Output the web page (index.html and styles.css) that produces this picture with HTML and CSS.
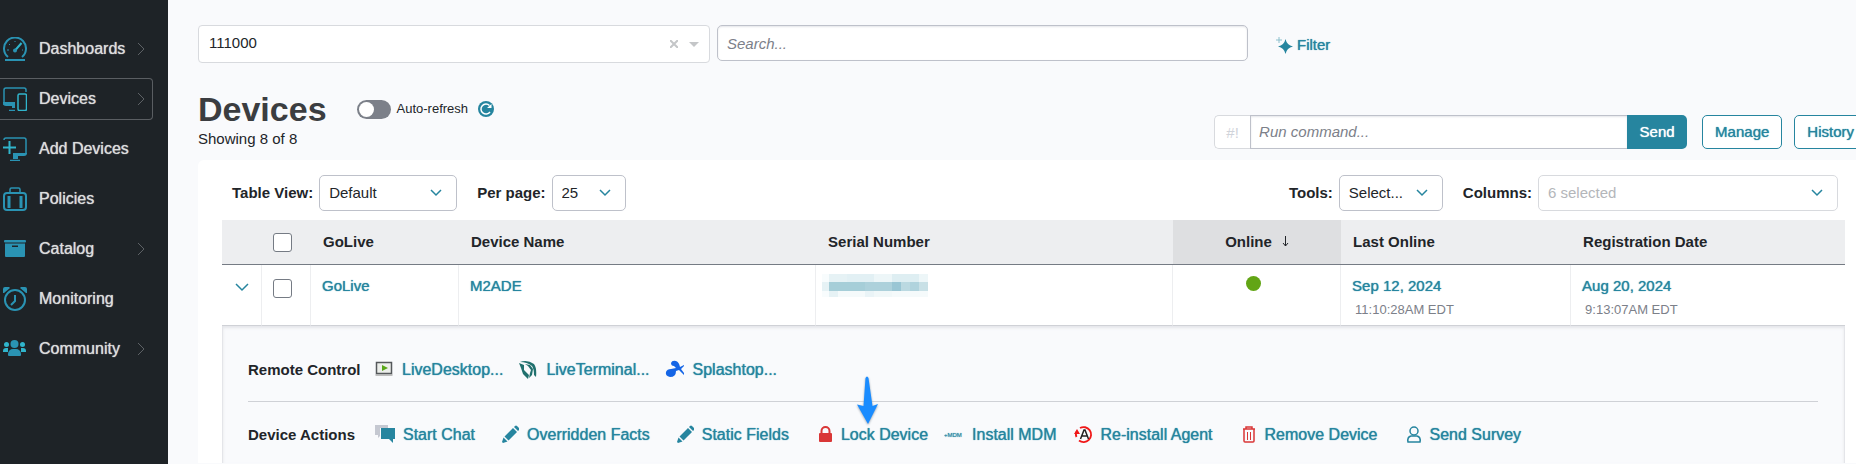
FILE: index.html
```html
<!DOCTYPE html>
<html lang="en">
  <head>
    <meta charset="utf-8">
    <title>Devices</title>
    <link rel="stylesheet" href="styles.css">
  </head>
  <body>
    <nav class="sidebar">
      <ul class="menu">
        <li><a class="menuItem" href="#">
          <svg class="menuIcon" viewBox="0 0 24 24" fill="none" stroke="#2a93b3" stroke-width="2"><path d="M5 20A11 11 0 1 1 19 20"/><path d="M2 23h20"/><path d="M12 13.500L18.500 6" stroke="#30b5cc"/><circle cx="12" cy="13.500" r="1" /><path d="M4 13h2M6 7l1 1M12 4v1M19 13h1" stroke-width="1"/></svg>
          <span>Dashboards</span>
          <svg class="more" viewBox="0 0 8 14"><path d="M1 1l6 6-6 6"/></svg>
        </a></li>
        <li><a class="menuItem activeItem" href="#">
          <svg class="menuIcon" viewBox="0 0 24 24" fill="none" stroke="#2a93b3" stroke-width="1.500"><path d="M1 18V3a2 2 0 0 1 2-2h18a2 2 0 0 1 2 2v2"/><path d="M0 15h12v6H9v-2H3a3 3 0 0 1-3-3z" fill="#2a93b3" stroke="none"/><path d="M6 23.500h6"/><rect x="15" y="7" width="8.500" height="16.500" rx="1.500" stroke="#30b5cc"/></svg>
          <span>Devices</span>
          <svg class="more" viewBox="0 0 8 14"><path d="M1 1l6 6-6 6"/></svg>
        </a></li>
        <li><a class="menuItem" href="#">
          <svg class="menuIcon" viewBox="0 0 24 24" fill="none" stroke="#2a93b3" stroke-width="1.500"><path d="M1 3a2 2 0 0 1 2-2h18a2 2 0 0 1 2 2v14"/><path d="M10 16h14a3 3 0 0 1-3 3h-6v3h-5z" fill="#2a93b3" stroke="none"/><path d="M7 23.500h10"/><path d="M0 10.500h13M6.500 4v13" stroke="#30b5cc" stroke-width="2"/></svg>
          <span>Add Devices</span>
        </a></li>
        <li><a class="menuItem" href="#">
          <svg class="menuIcon" viewBox="0 0 24 24" fill="none" stroke="#2a93b3" stroke-width="2"><rect x="1" y="6" width="22" height="17" rx="3"/><path d="M7 6V2.500A1.500 1.500 0 0 1 8.500 1h7A1.500 1.500 0 0 1 17 2.500V6" stroke-width="1.500"/><path d="M6 9v12M18 9v12" stroke-width="3"/></svg>
          <span>Policies</span>
        </a></li>
        <li><a class="menuItem" href="#">
          <svg class="menuIcon" viewBox="0 0 24 24" fill="#2a93b3"><rect x="1" y="3" width="22" height="2.500" rx="1"/><path d="M2 6.500h20V19a1 1 0 0 1-1 1H3a1 1 0 0 1-1-1zM9 8.500V10h6V8.500z" fill-rule="evenodd"/></svg>
          <span>Catalog</span>
          <svg class="more" viewBox="0 0 8 14"><path d="M1 1l6 6-6 6"/></svg>
        </a></li>
        <li><a class="menuItem" href="#">
          <svg class="menuIcon" viewBox="0 0 24 24" fill="none" stroke="#2a93b3" stroke-width="2"><circle cx="12" cy="13" r="10"/><path d="M12 8v6l-4 4"/><path d="M0 6V2a2 2 0 0 1 2-2h4l1 1-6 5zM24 6V2a2 2 0 0 0-2-2h-4l-1 1 6 5z" fill="#2a93b3" stroke="none"/></svg>
          <span>Monitoring</span>
        </a></li>
        <li><a class="menuItem" href="#">
          <svg class="menuIcon" viewBox="0 0 24 24" fill="#2a93b3"><g fill="#30b5cc"><circle cx="3.500" cy="7.500" r="2.500"/><circle cx="19.500" cy="7.500" r="2.500"/><path d="M0 15v-1a3 3 0 0 1 3-3h2v4zM23 15v-1a3 3 0 0 0-3-3h-2v4z"/></g><circle cx="11.500" cy="7" r="4"/><path d="M5 18v-1a5 5 0 0 1 5-5h3a5 5 0 0 1 5 5v1a1 1 0 0 1-1 1H6a1 1 0 0 1-1-1z"/></svg>
          <span>Community</span>
          <svg class="more" viewBox="0 0 8 14"><path d="M1 1l6 6-6 6"/></svg>
        </a></li>
      </ul>
    </nav>

    <main class="main">
      <div class="topBar">
        <div class="account">
          <select aria-label="Account"><option>111000</option></select>
          <div class="accountIcons">
            <button class="clear" type="button" aria-label="Clear account"><svg viewBox="0 0 8 8"><path d="M0 0l8 8M8 0L0 8"/></svg></button>
            <svg class="caret" viewBox="0 0 10 5"><path d="M0 0h10L5 5z"/></svg>
          </div>
        </div>
        <input class="search" type="text" placeholder="Search..." aria-label="Search">
        <a class="filter" href="#">
          <svg viewBox="0 0 17 17" fill="#26859f"><path d="M9.500 2q1.300 6.200 7.500 7.500-6.200 1.300-7.500 7.500Q8.200 10.800 2 9.500 8.200 8.200 9.500 2z"/><path d="M3 0v6M0 3h6" stroke="#8cc0cd" stroke-width="1"/></svg>
          Filter
        </a>
      </div>

      <header class="pageHeader">
        <div>
          <div class="titleLine">
            <h1>Devices</h1>
            <label class="toggle"><input type="checkbox"><span class="track"></span>Auto-refresh</label>
            <button class="refresh" type="button" aria-label="Refresh"><svg viewBox="0 0 16 16"><circle cx="8" cy="8" r="8" fill="#26859f"/><path d="M12 11a5 5 0 1 1-.5-6.500" fill="none" stroke="#fff" stroke-width="1.500"/><path d="M9 7h4.500V3z" fill="#fff"/></svg></button>
          </div>
          <p class="showing">Showing 8 of 8</p>
        </div>
        <form class="commands">
          <div class="runGroup">
            <span class="shebang">#!</span>
            <input type="text" placeholder="Run command..." aria-label="Run command">
            <button class="send" type="button">Send</button>
          </div>
          <button class="outline" type="button">Manage</button>
          <button class="outline" type="button">History</button>
        </form>
      </header>

      <section class="panel">
        <div class="toolbar">
          <label for="view">Table View:</label>
          <div class="pick pickView">
            <select id="view"><option>Default</option></select>
            <svg viewBox="0 0 12 8"><path d="M1 1l5 5 5-5"/></svg>
          </div>
          <label for="perPage" class="spaced">Per page:</label>
          <div class="pick pickPage">
            <select id="perPage"><option>25</option></select>
            <svg viewBox="0 0 12 8"><path d="M1 1l5 5 5-5"/></svg>
          </div>
          <label for="tools" class="pushed">Tools:</label>
          <div class="pick pickTools">
            <select id="tools"><option>Select...</option></select>
            <svg viewBox="0 0 12 8"><path d="M1 1l5 5 5-5"/></svg>
          </div>
          <label for="columns" class="spaced">Columns:</label>
          <div class="pick pickColumns">
            <select id="columns"><option>6 selected</option></select>
            <svg viewBox="0 0 12 8"><path d="M1 1l5 5 5-5"/></svg>
          </div>
        </div>

        <table class="devices">
          <colgroup>
            <col class="colExpand"><col class="colCheck"><col class="colLive"><col class="colWide">
            <col class="colWide"><col class="colOnline"><col class="colLast"><col>
          </colgroup>
          <thead>
            <tr>
              <th></th>
              <th class="checkCell"><input class="check" type="checkbox" aria-label="Select all"></th>
              <th>GoLive</th>
              <th>Device Name</th>
              <th>Serial Number</th>
              <th class="sorted">Online <svg viewBox="0 0 7 11"><path d="M3.500 0v10M1 7l2.500 3L6 7"/></svg></th>
              <th>Last Online</th>
              <th>Registration Date</th>
            </tr>
          </thead>
          <tbody>
            <tr class="device">
              <td class="expandCell"><button type="button" aria-label="Collapse"><svg viewBox="0 0 14 9"><path d="M1 1l6 6 6-6"/></svg></button></td>
              <td class="checkCell"><input class="check" type="checkbox" aria-label="Select M2ADE"></td>
              <td><a href="#">GoLive</a></td>
              <td><a href="#">M2ADE</a></td>
              <td class="serialCell">
                <svg class="masked" viewBox="0 0 106 23" shape-rendering="crispEdges">
                  <path fill="#f8fcfd" d="M0 0h7v8H0zM0 17h7v6H0z"/><path fill="#e6f2f5" d="M0 8h7v9H0zM7 0h18v8H7zM7 17h9v6H7z"/>
                  <path fill="#e2f0f4" d="M25 0h27v8H25z"/><path fill="#deeef2" d="M70 0h27v8H70z"/><path fill="#edf6f8" d="M52 0h18v8H52zM97 0h9v8H97z"/>
                  <path fill="#f5fafb" d="M16 17h27v6H16zM70 17h36v6H70z"/><path fill="#eaf4f7" d="M43 17h9v6h-9z"/><path fill="#f1f8f9" d="M52 17h18v6H52z"/>
                  <path fill="#a6ced8" d="M7 8h36v9H7z"/><path fill="#add1db" d="M43 8h27v9H43z"/><path fill="#9ac6d4" d="M70 8h9v9h-9z"/>
                  <path fill="#bbd9e1" d="M79 8h9v9h-9z"/><path fill="#b0d3dd" d="M88 8h9v9h-9z"/><path fill="#c8e0e6" d="M97 8h9v9h-9z"/>
                </svg>
              </td>
              <td class="onlineCell"><span class="dot"></span></td>
              <td><a href="#">Sep 12, 2024</a><div class="time">11:10:28AM EDT</div></td>
              <td><a href="#">Aug 20, 2024</a><div class="time">9:13:07AM EDT</div></td>
            </tr>
            <tr>
              <td class="detail" colspan="8">
                <div class="detailRow">
                  <strong>Remote Control</strong>
                  <a class="action" href="#"><svg viewBox="0 0 20 20"><path d="M2.500 2.500h15v11h-15z" fill="#eceeea" stroke="#55585b" stroke-width="1.500"/><path d="M8 5l6 3-6 3z" fill="#58a618"/><path d="M1.500 15h17" stroke="#aaa" stroke-width="1.500"/></svg>LiveDesktop...</a>
                  <a class="action" href="#"><svg viewBox="0 0 20 20" fill="#20706d"><path d="M1 3l5 2v5l5 5-1 4-5-5-2-6z"/><path d="M2 2q7-3 14 2 3 4 2 13l-2-2q0-6-2-9Q9 2 2 2z"/><path d="M7 4l5 1 3 4-1 6-3 3 1-5 1-3-3-4z"/></svg>LiveTerminal...</a>
                  <a class="action" href="#"><svg viewBox="0 0 20 20"><path d="M6 3q1-3 5-2 3 1 4 6l4-2v1l-3 3 3 4v2l-5-5-3 1q0 6-6 6-5-1-4-5 1-3 5-3l5-1-2-2Q6 6 6 3z" fill="#1565e6"/></svg>Splashtop...</a>
                </div>
                <div class="detailRow">
                  <strong>Device Actions</strong>
                  <a class="action wide" href="#"><svg viewBox="0 0 20 20"><path d="M0 0h13v3H5v8l-2 2v-3H0z" fill="#c5c8d1"/><path d="M6 3h14v11h-2v4l-4-4H6z" fill="#26859f"/></svg>Start Chat</a>
                  <a class="action wide" href="#"><svg viewBox="0 0 20 20" fill="#26859f"><path d="M14 3l4 4-8.500 8.500-4-4zM15 2l1-1q1-1 2 0l2 2q1 1 0 2l-1 1zM4.500 12.500l4 4L4 18l-1-1z"/></svg>Overridden Facts</a>
                  <a class="action wide" href="#"><svg viewBox="0 0 20 20" fill="#26859f"><path d="M14 3l4 4-8.500 8.500-4-4zM15 2l1-1q1-1 2 0l2 2q1 1 0 2l-1 1zM4.500 12.500l4 4L4 18l-1-1z"/></svg>Static Fields</a>
                  <a class="action" href="#"><svg viewBox="0 0 20 20"><rect x="6" y="8" width="13" height="9" rx="1" fill="#d93636"/><path d="M8.500 8V6a4 4 0 0 1 8 0v2" fill="none" stroke="#d93636" stroke-width="2"/></svg>Lock Device
                    <svg class="pointer" viewBox="0 0 24 52"><path d="M9.500 3q1.500-3 3 0l4 28 5.500-2-10 20L1 29.500l6.500 1.500z"/></svg>
                  </a>
                  <a class="action" href="#"><svg viewBox="0 0 20 20"><text class="mdm" x="0" y="12">+MDM</text></svg>Install MDM</a>
                  <a class="action wide" href="#"><svg viewBox="0 0 20 20" fill="none"><path d="M7 3a7.500 7.500 0 1 1-1 12.500M3.500 12Q2 9 4 6" stroke="#f01818" stroke-width="1.800"/><path d="M1 9l3-5 3 5z" fill="#f01818"/><path d="M7.500 14l3.500-9h1l3.500 9M9 11h5" stroke="#222" stroke-width="1.500"/></svg>Re-install Agent</a>
                  <a class="action wide" href="#"><svg viewBox="0 0 20 20" fill="none" stroke="#d93636"><path d="M6 4h12M9 3.500V2h6v1.500M7 4v12a1 1 0 0 0 1 1h8a1 1 0 0 0 1-1V4" stroke-width="1.500"/><path d="M10.500 7v8M13.500 7v8"/></svg>Remove Device</a>
                  <a class="action" href="#"><svg viewBox="0 0 20 20" fill="none" stroke="#26859f" stroke-width="1.500"><circle cx="12" cy="6" r="4"/><path d="M6 17q-1-5 3-6h6q4 1 3 6z"/></svg>Send Survey</a>
                </div>
              </td>
            </tr>
          </tbody>
        </table>
      </section>
    </main>
  </body>
</html>
```
FILE: styles.css
```css
* {
  box-sizing: border-box;
}

body {
  display: flex;
  min-height: 100vh;
  margin: 0;
  overflow: hidden;
  background-color: #f9fafc;
  color: #222529;
  font: 15px/20px "Liberation Sans", Arial, sans-serif;
}

a {
  color: #26859f;
  text-decoration: none;
}

/* medium weight */
a, .send, .outline {
  text-shadow: 0 0 1px currentColor;
}

button, input, select {
  margin: 0;
  color: inherit;
  font: inherit;
}

button {
  padding: 0;
  background: none;
  border: 0;
}

svg {
  display: block;
}

/* sidebar */
.sidebar {
  flex: none;
  width: 168px;
  padding: 28px 16px 0 0;
  background-color: #1e2327;
}

.menu {
  display: grid;
  gap: 8px;
  margin: 0;
  padding: 0;
  list-style: none;
}

.menuItem {
  display: flex;
  align-items: center;
  gap: 12px;
  height: 42px;
  padding: 0 7px 0 3px;
  border: solid 1px transparent;
  border-left: 0;
  border-radius: 0 4px 4px 0;
  color: #dcdddd;
  font-size: 16px;
}

.activeItem {
  border-color: #5a5e62;
}

.menuIcon {
  flex: none;
  width: 24px;
  height: 24px;
}

.more {
  width: 8px;
  height: 14px;
  margin-left: auto;
  fill: none;
  stroke: #5d6165;
  stroke-width: 1;
}

/* top bar */
.main {
  flex: 1;
  min-width: 0;
  margin-right: -18px;
  padding: 25px 0 0 30px;
}

.topBar {
  display: flex;
  align-items: flex-start;
  gap: 7px;
}

.account {
  display: grid;
  flex: 1;
  max-width: 512px;
}

.account > * {
  grid-area: 1 / 1;
}

.account select {
  height: 38px;
  padding: 0 10px 2px;
  appearance: none;
  background-color: white;
  border: solid 1px #d8dade;
  border-radius: 4px;
}

.accountIcons {
  display: flex;
  align-items: center;
  justify-self: end;
  gap: 11px;
  padding-right: 11px;
}

.clear svg {
  width: 8px;
  height: 8px;
  stroke: #c4c6c8;
  stroke-width: 2;
}

.caret {
  width: 10px;
  height: 5px;
  fill: #c4c6c8;
}

.search {
  flex: 1;
  max-width: 531px;
  height: 36px;
  padding: 0 9px;
  background-color: white;
  border: solid 1px #bec1ca;
  border-radius: 5px;
  box-shadow: inset 0 1px 2px #e4e5e9;
}

::placeholder {
  color: #7c8089;
  font-style: italic;
  opacity: 1;
}

.filter {
  display: flex;
  align-items: center;
  gap: 4px;
  height: 40px;
  margin-left: 21px;
}

.filter svg {
  width: 17px;
  height: 17px;
}

/* title and commands */
.pageHeader {
  display: flex;
  align-items: flex-end;
  justify-content: space-between;
  padding: 24px 0 11px;
}

.titleLine {
  display: flex;
  align-items: center;
}

h1 {
  margin: 0;
  color: #3b3d40;
  font-size: 34px;
  line-height: 40px;
}

.showing {
  margin: 0;
}

.toggle {
  display: flex;
  align-items: center;
  gap: 6px;
  margin-left: 30px;
  font-size: 13px;
}

.toggle input {
  position: absolute;
  opacity: 0;
}

.track {
  width: 34px;
  height: 19px;
  padding: 2px;
  background-color: #7c8089;
  border-radius: 10px;
}

.track::before {
  content: "";
  display: block;
  width: 15px;
  height: 15px;
  background-color: white;
  border-radius: 50%;
}

.refresh {
  margin-left: 10px;
}

.refresh svg {
  width: 16px;
  height: 16px;
}

.commands {
  display: flex;
  height: 34px;
  margin-right: 7px;
}

.runGroup {
  display: flex;
  width: 473px;
  margin-right: 3px;
}

.shebang {
  width: 36px;
  background-color: white;
  border: solid 1px #d8dade;
  border-right: 0;
  border-radius: 5px 0 0 5px;
  color: #d0d3da;
  line-height: 34px;
  text-align: center;
}

.runGroup input {
  flex: 1;
  min-width: 0;
  padding: 0 8px;
  background-color: white;
  border: solid 1px #bec1ca;
  border-right: 0;
  border-radius: 0;
  box-shadow: inset 0 1px 2px #e4e5e9;
}

.send {
  width: 60px;
  background-color: #26859f;
  border-radius: 0 5px 5px 0;
  color: white;
}

.outline {
  margin-left: 12px;
  padding: 0 12px;
  background-color: white;
  border: solid 1px #26859f;
  border-radius: 5px;
  color: #26859f;
}

/* table toolbar */
.panel {
  padding: 15px 29px 0 24px;
  background-color: white;
  border-radius: 6px 0 0 0;
}

.toolbar {
  display: flex;
  align-items: center;
  gap: 6px;
  padding: 0 7px 9px 10px;
  font-weight: bold;
}

.pick {
  display: grid;
  align-items: center;
  font-weight: normal;
}

.pick > * {
  grid-area: 1 / 1;
}

.pick select {
  width: 100%;
  height: 36px;
  padding: 0 9px;
  appearance: none;
  background-color: white;
  border: solid 1px #bec1ca;
  border-radius: 5px;
}

.pick svg {
  justify-self: end;
  width: 12px;
  height: 8px;
  margin-right: 15px;
  pointer-events: none;
}

.pick path, .expandCell path {
  fill: none;
  stroke: #26859f;
  stroke-width: 1.5;
}

.pickView {
  width: 138px;
}

.pickPage {
  width: 74px;
}

.pickTools {
  width: 104px;
}

.pickColumns {
  width: 300px;
}

.pickColumns select {
  border-color: #d8dade;
  color: #b4b6ba;
}

.spaced {
  margin-left: 14px;
}

.pushed {
  margin-left: auto;
}

/* devices */
.devices {
  width: 100%;
  border-spacing: 0;
  table-layout: fixed;
}

.colExpand {
  width: 40px;
}

.colCheck {
  width: 49px;
}

.colLive {
  width: 148px;
}

.colWide {
  width: 22%;
}

.colOnline {
  width: 168px;
}

.colLast {
  width: 230px;
}

th {
  height: 45px;
  padding: 0 12px 1px;
  background-color: #edeef0;
  border-bottom: solid 1px #757b84;
  text-align: left;
}

.sorted {
  background-color: #dedfe1;
  text-align: center;
}

.sorted svg {
  display: inline-block;
  width: 7px;
  height: 11px;
  margin-left: 6px;
  fill: none;
  stroke: #222529;
}

.device td {
  height: 61px;
  padding: 11px 11px 0;
  border-bottom: solid 1px #cfd1d6;
  border-right: solid 1px #edeef0;
  vertical-align: top;
}

.device td:last-child {
  border-right: 0;
}

th.checkCell, .device .checkCell {
  padding: 0;
  text-align: center;
}

.device .checkCell {
  padding-top: 14px;
}

.check {
  display: block;
  width: 19px;
  height: 19px;
  margin: 0 auto 0 11px;
  appearance: none;
  background-color: white;
  border: solid 1px #757b84;
  border-radius: 3px;
}

.device .expandCell {
  padding: 18px 13px 0;
}

.expandCell button, .expandCell svg {
  display: block;
  width: 14px;
  height: 9px;
}

.device .serialCell {
  padding: 9px 6px 0;
}

.masked {
  width: 106px;
  height: 23px;
}

.device .onlineCell {
  padding-right: 17px;
}

.dot {
  display: block;
  width: 15px;
  height: 15px;
  margin: 0 auto;
  background-color: #62a515;
  border-radius: 50%;
}

.time {
  margin-top: 4px;
  padding-left: 3px;
  color: #7c8089;
  font-size: 13px;
}

/* expanded row */
.detail {
  padding: 0 26px 18px 25px;
  background-color: #f9fafc;
  border: solid 1px #e4e5e9;
  border-width: 0 1px;
  box-shadow: inset 0 2px 3px #e4e5e9;
}

.detailRow {
  display: flex;
  gap: 16px;
  padding-top: 23px;
}

.detailRow:first-child {
  gap: 15px;
  padding: 34px 0 21px;
  border-bottom: solid 1px #cfd1d6;
}

.detailRow strong {
  width: 111px;
  white-space: nowrap;
}

.action {
  display: flex;
  position: relative;
  align-items: center;
  gap: 8px;
  font-size: 16px;
  white-space: nowrap;
}

.wide {
  padding-right: 8px;
}

.action svg {
  flex: none;
  width: 20px;
  height: 20px;
}

.mdm {
  fill: #26859f;
  font-size: 6px;
}

.action .pointer {
  position: absolute;
  bottom: 18px;
  left: 43px;
  width: 24px;
  height: 52px;
  fill: #1a8cff;
  filter: drop-shadow(0 1px 1px #9aa4b0);
}
```
